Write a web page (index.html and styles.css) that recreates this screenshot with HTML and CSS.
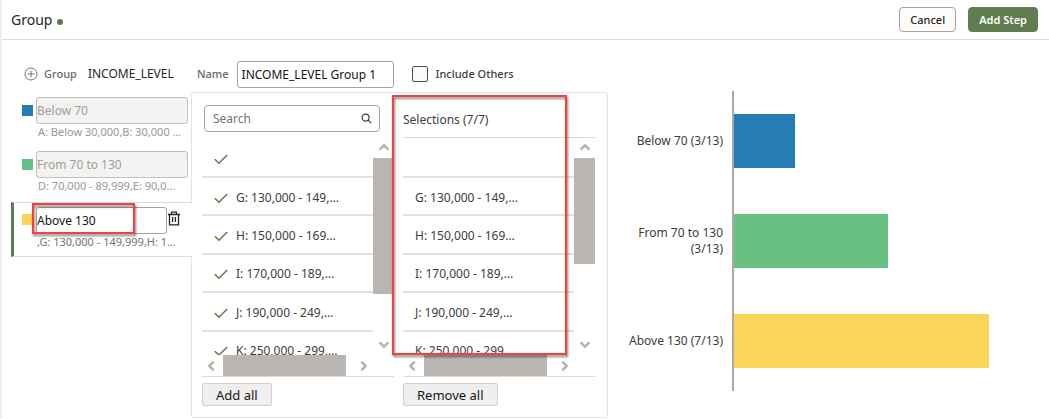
FILE: index.html
```
<!DOCTYPE html>
<html lang="en">
<head>
<meta charset="utf-8">
<title>Group</title>
<link rel="stylesheet" href="styles.css">
</head>
<body>
<svg class="sprite" aria-hidden="true">
  <symbol id="check" viewBox="0 0 12 10"><path d="M.7 5.2 4.2 8.600 11.300 1.500" fill="none" stroke="#5a7d4c" stroke-width="1.300"/></symbol>
  <symbol id="up" viewBox="0 0 12 8"><path d="M1.600 6.600 6 2.400l4.400 4.200" fill="none" stroke="#bbb5b0" stroke-width="2.600"/></symbol>
  <symbol id="down" viewBox="0 0 12 8"><path d="M1.600 1.400 6 5.600l4.400-4.200" fill="none" stroke="#bbb5b0" stroke-width="2.600"/></symbol>
  <symbol id="left" viewBox="0 0 8 12"><path d="M6.600 1.600 2.400 6l4.200 4.400" fill="none" stroke="#bbb5b0" stroke-width="2.600"/></symbol>
  <symbol id="right" viewBox="0 0 8 12"><path d="M1.400 1.600 5.600 6l-4.200 4.400" fill="none" stroke="#bbb5b0" stroke-width="2.600"/></symbol>
</svg>
<header class="header">
  <h1 class="title">Group</h1>
  <span class="status-dot"></span>
  <div class="actions">
    <button class="btn" type="button">Cancel</button>
    <button class="btn btn-primary" type="button">Add Step</button>
  </div>
</header>
<main class="main">
  <section class="editor">
    <div class="toolbar">
      <div class="source">
        <button class="icon-btn" type="button" aria-label="Add group"><svg width="14" height="14" viewBox="0 0 14 14" fill="none" stroke="#777472"><circle cx="7" cy="7" r="6"/><path d="M7 3.500v7M3.500 7h7"/></svg></button>
        <span class="muted">Group</span>
        <span class="column-name">INCOME_LEVEL</span>
      </div>
      <label class="muted" for="name">Name</label>
      <input class="field name-field" id="name" type="text" value="INCOME_LEVEL Group 1">
      <label class="others"><input class="checkbox" type="checkbox">Include Others</label>
    </div>
    <div class="workspace">
      <ul class="groups">
        <li class="group">
          <span class="swatch blue"></span>
          <input class="field group-field" type="text" value="Below 70" aria-label="Group 1 name" disabled>
          <span class="members">A: Below 30,000,B: 30,000 …</span>
        </li>
        <li class="group">
          <span class="swatch green"></span>
          <input class="field group-field" type="text" value="From 70 to 130" aria-label="Group 2 name" disabled>
          <span class="members">D: 70,000 - 89,999,E: 90,0…</span>
        </li>
        <li class="group active">
          <span class="swatch yellow"></span>
          <div class="edit">
            <input class="field group-field" type="text" value="Above 130" aria-label="Group 3 name">
            <button class="icon-btn delete" type="button" aria-label="Delete group"><svg width="14" height="15" viewBox="0 0 14 15" fill="none" stroke="#282625" stroke-width="1.300"><path d="M1 3.500h12M4.500 3.500V1.200h5v2.300M2.500 3.500v10.300h9V3.500M5.600 6v5M8.400 6v5"/></svg></button>
          </div>
          <span class="members">,G: 130,000 - 149,999,H: 1…</span>
          <span class="callout callout-name"></span>
        </li>
      </ul>
      <div class="panel">
        <div class="picker">
          <div class="picker-head">
            <div class="search">
              <input class="search-input" type="text" placeholder="Search" aria-label="Search values">
              <svg width="11" height="11" viewBox="0 0 12 12" fill="none" stroke="#403c3a" stroke-width="1.300"><circle cx="5" cy="5" r="3.800"/><path d="m7.800 7.800 3.200 3.200"/></svg>
            </div>
          </div>
          <div class="scroller">
            <div class="viewport">
              <ul class="rows">
                <li><svg class="tick"><use href="#check"/></svg></li>
                <li><svg class="tick"><use href="#check"/></svg>G: 130,000 - 149,…</li>
                <li><svg class="tick"><use href="#check"/></svg>H: 150,000 - 169…</li>
                <li><svg class="tick"><use href="#check"/></svg>I: 170,000 - 189,…</li>
                <li><svg class="tick"><use href="#check"/></svg>J: 190,000 - 249,…</li>
                <li><svg class="tick"><use href="#check"/></svg>K: 250,000 - 299,…</li>
              </ul>
            </div>
            <div class="vbar"><svg class="arrow-v"><use href="#up"/></svg><div class="vtrack"><div class="thumb" style="height:77%"></div></div><svg class="arrow-v"><use href="#down"/></svg></div>
            <div class="hbar"><svg class="arrow-h"><use href="#left"/></svg><div class="htrack"><div class="thumb" style="width:95%"></div></div><svg class="arrow-h"><use href="#right"/></svg></div>
          </div>
          <button class="bulk" type="button">Add all</button>
        </div>
        <div class="picker">
          <div class="picker-head selected-head">Selections (7/7)</div>
          <div class="scroller">
            <div class="viewport">
              <ul class="rows">
                <li></li>
                <li>G: 130,000 - 149,…</li>
                <li>H: 150,000 - 169…</li>
                <li>I: 170,000 - 189,…</li>
                <li>J: 190,000 - 249,…</li>
                <li>K: 250,000 - 299,…</li>
              </ul>
            </div>
            <div class="vbar"><svg class="arrow-v"><use href="#up"/></svg><div class="vtrack"><div class="thumb" style="height:60%"></div></div><svg class="arrow-v"><use href="#down"/></svg></div>
            <div class="hbar"><svg class="arrow-h"><use href="#left"/></svg><div class="htrack"><div class="thumb" style="width:95%"></div></div><svg class="arrow-h"><use href="#right"/></svg></div>
          </div>
          <button class="bulk" type="button">Remove all</button>
          <span class="callout callout-selections"></span>
        </div>
      </div>
    </div>
  </section>
  <section class="chart" aria-label="Values per group">
    <div class="chart-row"><span class="chart-label">Below 70 (3/13)</span><div class="plot"><div class="bar blue" style="width:19.5%"></div></div></div>
    <div class="chart-row"><span class="chart-label">From 70 to 130 (3/13)</span><div class="plot"><div class="bar green" style="width:49%"></div></div></div>
    <div class="chart-row"><span class="chart-label">Above 130 (7/13)</span><div class="plot"><div class="bar yellow" style="width:81%"></div></div></div>
  </section>
</main>
</body>
</html>
```
FILE: styles.css
```
* { box-sizing: border-box; }
body { margin: 0; background: #fff; border-left: 2px solid #f0efee; font: 12px/16px "Noto Sans", "Open Sans", sans-serif; color: #403d3b; }
ul { list-style: none; margin: 0; padding: 0; }
button, input { font: inherit; color: inherit; margin: 0; }
.sprite { display: none; }
svg { display: block; }

.header { display: flex; align-items: center; height: 40px; padding: 0 11px 0 9px; border-bottom: 1px solid #d9dedd; }
.title { margin: 0; font-size: 14px; font-weight: 400; line-height: 20px; color: #282625; }
.status-dot { width: 6px; height: 6px; margin: 4px 0 0 5px; border-radius: 50%; background: #5a7d4c; }
.actions { display: flex; gap: 12px; margin-left: auto; }
.btn { height: 25px; padding: 0 10px; border: 1px solid #a8a39f; border-radius: 4px; background: #fdfcfb; color: #282625; font-size: 11px; font-weight: 500; }
.btn-primary { border-color: #5f7d4f; background: #5f7d4f; color: #fff; font-weight: 600; }

.main { display: flex; align-items: flex-start; }
.editor { flex: none; width: 606px; padding-top: 20px; }
.toolbar { display: flex; align-items: center; height: 28px; margin-bottom: 4px; }
.source { display: flex; align-items: center; width: 195px; padding-left: 22px; }
.source .muted { margin: 0 11px 0 6px; }
.muted { color: #6b6764; font-size: 11px; font-weight: 500; }
.column-name { color: #282625; }
.icon-btn { flex: none; padding: 0; border: 0; background: none; }
.field { border: 1px solid #a8a39f; border-radius: 3px; background: #fff; color: #161513; font-size: 12px; }
.name-field { width: 157px; height: 27px; margin-left: 8px; padding: 0 4px; }
.others { display: flex; align-items: center; gap: 8px; margin-left: 18px; font-size: 11px; font-weight: 500; }
.checkbox { appearance: none; width: 16px; height: 16px; border: 1px solid #55504d; border-radius: 2px; background: #fbfaf9; }

.workspace { display: flex; }
.groups { flex: none; width: 189px; padding-top: 2px; }
.group { position: relative; display: grid; grid-template-columns: 11px 1fr; align-content: start; column-gap: 3px; margin-left: 9px; padding: 3px 3px 3px 11px; height: 54px; }
.group.active { height: 55px; margin-right: -1px; padding: 4px 4px 3px 8px; border: solid #d5dce4; border-width: 1px 0; border-left: 3px solid #5a7d4c; background: #fff; z-index: 1; }
.swatch { width: 11px; height: 11px; margin-top: 8px; }
.active .swatch { margin-top: 7px; }
.blue { background: #267db3; }
.green { background: #68c182; }
.yellow { background: #fad55c; }
.group-field { width: 100%; height: 27px; padding: 0; }
.group-field:disabled { background: #f4f3f1; border-color: #c4c0bc; color: #a19d99; }
.edit { display: flex; align-items: flex-start; padding-right: 7px; }
.edit .group-field { flex: 1; min-width: 0; }
.delete { padding-top: 4px; }
.members { grid-column: 2; padding-left: 2px; color: #9c9895; font-size: 11px; white-space: nowrap; }
.active .members { color: #77736f; padding-left: 1px; }

.panel { flex: 1; display: grid; grid-template-columns: 1fr 1fr; gap: 9px; padding: 0 12px 11px 10px; border: 1px solid #dde5eb; border-radius: 3px; }
.picker { position: relative; min-width: 0; }
.picker-head { height: 45px; padding: 12px 14px 0 2px; }
.selected-head { padding: 19px 0 0; border-bottom: 1px solid #dddbd9; }
.search { display: flex; align-items: center; height: 27px; padding: 0 7px 0 8px; border: 1px solid #aaa5a1; border-radius: 4px; }
.search-input { flex: 1; min-width: 0; padding: 0; border: 0; outline: 0; background: none; font-size: 12px; }
.search-input::placeholder { color: #77736f; opacity: 1; }
.scroller { display: grid; grid-template-columns: 1fr 21px; grid-template-rows: 217px 21px; border-bottom: 1px solid #dddbd9; }
.viewport { overflow: hidden; }
.rows { display: grid; grid-template-rows: 40px repeat(5, 1fr); height: 232px; }
.rows li { display: flex; align-items: center; padding: 3px 0 0 12px; border-bottom: 2px solid #e3e1e0; white-space: nowrap; }
.tick { width: 14px; height: 12px; margin-right: 8px; }
.vbar { display: flex; flex-direction: column; align-items: center; padding: 5px 0 6px; }
.vtrack { flex: 1; width: 100%; margin: 7px 0; }
.hbar { display: flex; align-items: center; padding: 0 5px; height: 21px; width: 171px; }
.htrack { flex: 1; height: 100%; margin: 0 8px; }
.arrow-v { flex: none; width: 12px; height: 8px; }
.arrow-h { flex: none; width: 8px; height: 12px; }
.thumb { width: 100%; height: 100%; background: #bbb5b1; }
.bulk { display: block; height: 23px; margin-top: 6px; padding: 0 13px; border: 1px solid #d2d1d0; border-radius: 2px; background: #efefef; color: #161513; font-size: 13px; }

.callout { position: absolute; border: 2px solid #f5403f; filter: drop-shadow(1px 2px 1px rgba(0, 0, 0, .5)); pointer-events: none; }
.callout-name { left: 18px; top: 0; width: 103px; height: 31px; }
.callout-selections { left: -11px; top: 2px; width: 175px; height: 260px; z-index: 2; }

.chart { flex: 1; min-width: 0; margin-top: 51px; padding-left: 18px; }
.chart-row { display: grid; grid-template-columns: 97px 1fr; column-gap: 9px; height: 100px; }
.chart-label { align-self: center; text-align: right; }
.plot { display: flex; align-items: center; border-left: 2px solid #a9a9a9; }
.bar { height: 54px; }
```
